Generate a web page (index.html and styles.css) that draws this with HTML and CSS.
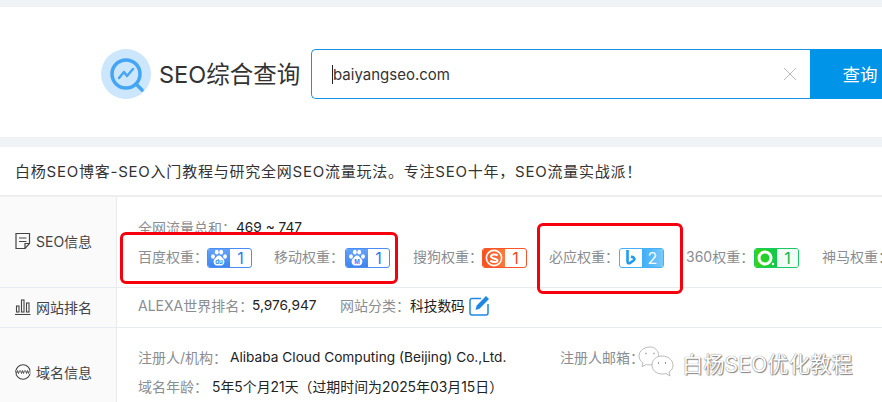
FILE: index.html
```html
<!DOCTYPE html>
<html lang="zh-CN">
<head>
  <meta charset="UTF-8">
  <title>SEO综合查询</title>
  <link rel="stylesheet" href="styles.css">
</head>
<body>
  <header class="search-band">
    <div class="logo">
      <svg width="50" height="50" viewBox="0 0 50 50">
        <circle cx="25" cy="25" r="25" fill="#cbe6fd"/>
        <circle cx="25" cy="25" r="14" fill="none" stroke="#45a5f5" stroke-width="3.5"/>
        <path d="M35 35l6 6" stroke="#45a5f5" stroke-width="3.6" stroke-linecap="round"/>
        <path d="M18 29l5-6 3 4 6-7" fill="none" stroke="#45a5f5" stroke-width="2.4" stroke-linecap="round" stroke-linejoin="round"/>
      </svg>
      <span class="logo-title">SEO综合查询</span>
    </div>
    <div class="search-box">
      <div class="search-input">
        <span class="search-value">baiyangseo.com</span>
        <svg class="search-clear" width="14" height="14" viewBox="0 0 14 14">
          <path d="M1 1l12 12M13 1L1 13" stroke="#bbb" stroke-width="1"/>
        </svg>
      </div>
      <button class="search-btn">查询</button>
    </div>
  </header>

  <main class="result">
    <p class="slogan">白杨SEO博客-SEO入门教程与研究全网SEO流量玩法。专注SEO十年&#xFF0C;SEO流量实战派&#xFF01;</p>

    <section class="row row-seo">
      <div class="row-head">
        <svg width="16" height="18" viewBox="0 0 16 18" fill="none" stroke="#444" stroke-width="1.2">
          <path d="M1 1.5h13.5v10L10 16.5H1z"/>
          <path d="M4 6h7.5M4 9.5h7.5M10 16.5v-5h4.5"/>
        </svg>
        <span>SEO信息</span>
      </div>
      <div class="row-body">
        <div class="line">
          <span class="key total-key">全网流量总和&#xFF1A;</span><span class="val">469 ~ 747</span>
        </div>
        <div class="line weights">
          <div class="weight">
            <span class="key">百度权重&#xFF1A;</span>
            <span class="badge badge-baidu">
              <span class="badge-icon">
                <svg width="18" height="18" viewBox="0 0 18 18">
                  <g fill="#fff">
                    <ellipse cx="3" cy="7.5" rx="1.9" ry="2.3"/><ellipse cx="6.8" cy="3.2" rx="1.9" ry="2.4"/>
                    <ellipse cx="11.2" cy="3.2" rx="1.9" ry="2.4"/><ellipse cx="15" cy="7.5" rx="1.9" ry="2.3"/>
                    <path d="M9 6.5c-2.2 0-2.8 2.2-4.5 3.6-1.7 1.5-.9 6.4 2 6.4h5c2.9 0 3.7-4.9 2-6.4C11.8 8.7 11.2 6.5 9 6.5z"/>
                  </g>
                  <text class="paw-text" x="9" y="15.2">du</text>
                </svg>
              </span>
              <span class="badge-num">1</span>
            </span>
          </div>
          <div class="weight">
            <span class="key">移动权重&#xFF1A;</span>
            <span class="badge badge-baidu">
              <span class="badge-icon">
                <svg width="18" height="18" viewBox="0 0 18 18">
                  <g fill="#fff">
                    <ellipse cx="3" cy="7.5" rx="1.9" ry="2.3"/><ellipse cx="6.8" cy="3.2" rx="1.9" ry="2.4"/>
                    <ellipse cx="11.2" cy="3.2" rx="1.9" ry="2.4"/><ellipse cx="15" cy="7.5" rx="1.9" ry="2.3"/>
                    <path d="M9 6.5c-2.2 0-2.8 2.2-4.5 3.6-1.7 1.5-.9 6.4 2 6.4h5c2.9 0 3.7-4.9 2-6.4C11.8 8.7 11.2 6.5 9 6.5z"/>
                  </g>
                  <text class="paw-text" x="9" y="15.2">M</text>
                </svg>
              </span>
              <span class="badge-num">1</span>
            </span>
          </div>
          <div class="weight">
            <span class="key">搜狗权重&#xFF1A;</span>
            <span class="badge badge-sogou">
              <span class="badge-icon">
                <svg width="18" height="18" viewBox="0 0 18 18" fill="none" stroke="#fff">
                  <circle cx="9" cy="9" r="7.6" stroke-width="1.6"/>
                  <path d="M12.6 6.5C11 5 6 5 6 7.5S12.5 9.5 12.5 11.5 7 13.5 5.3 11.5" stroke-width="2"/>
                </svg>
              </span>
              <span class="badge-num">1</span>
            </span>
          </div>
          <div class="weight">
            <span class="key">必应权重&#xFF1A;</span>
            <span class="badge badge-bing">
              <span class="badge-icon">
                <svg width="12" height="16" viewBox="0 0 12 16" fill="none" stroke="#1f9bf0" stroke-width="2.6">
                  <path d="M2.5 0v11.5q0 2.5 2.5 1.5l3.5-2.5q2-1.5 0-3L6 6.5"/>
                </svg>
              </span>
              <span class="badge-num">2</span>
            </span>
          </div>
          <div class="weight">
            <span class="key">360权重&#xFF1A;</span>
            <span class="badge badge-360">
              <span class="badge-icon">
                <svg width="20" height="18" viewBox="0 0 20 18" fill="none">
                  <circle cx="9" cy="9" r="6" stroke="#fff" stroke-width="3"/>
                  <circle cx="17" cy="15" r="1.2" fill="#fff"/>
                </svg>
              </span>
              <span class="badge-num">1</span>
            </span>
          </div>
          <div class="weight">
            <span class="key">神马权重&#xFF1A;</span>
          </div>
        </div>
      </div>
    </section>

    <section class="row row-rank">
      <div class="row-head">
        <svg width="16" height="16" viewBox="0 0 16 16" fill="none" stroke="#444" stroke-width="1.1">
          <path d="M0 15.5h15.5"/>
          <rect x="1.5" y="7" width="2.5" height="6"/>
          <rect x="6.5" y="1" width="2.5" height="12"/>
          <rect x="11.5" y="4" width="2.5" height="9"/>
        </svg>
        <span>网站排名</span>
      </div>
      <div class="row-body">
        <div class="line">
          <span class="key alexa-key">ALEXA世界排名&#xFF1A;</span><span class="val val-alexa">5,976,947</span>
          <span class="key cat-key">网站分类&#xFF1A;</span><span class="val">科技数码</span>
          <svg class="edit-icon" width="21" height="21" viewBox="0 0 21 21" fill="none">
            <path d="M12 3.5H3a2 2 0 0 0-2 2V18a2 2 0 0 0 2 2h14a2 2 0 0 0 2-2V9" stroke="#1e88e5" stroke-width="1.5"/>
            <path d="M6.5 15l1.2-4.5L17 1l3 3-9.500 9.700z" fill="#1e88e5"/>
          </svg>
        </div>
      </div>
    </section>

    <section class="row row-domain">
      <div class="row-head">
        <svg width="16" height="16" viewBox="0 0 16 16" fill="none" stroke="#444" stroke-width="1.1">
          <circle cx="8" cy="8" r="7.2"/>
          <path d="M.5 8h15" stroke-width="3.5" stroke="#fafafa"/>
          <path d="M.5 6.5l1 3 1-3 1 3 1-3M5.5 6.5l1 3 1-3 1 3 1-3M10.5 6.5l1 3 1-3 1 3 1-3" stroke-width=".9"/>
        </svg>
        <span>域名信息</span>
      </div>
      <div class="row-body">
        <div class="line">
          <span class="key owner-key">注册人/机构&#xFF1A;</span><span class="val owner-val">Alibaba Cloud Computing (Beijing) Co.,Ltd.</span>
          <span class="key">注册人邮箱&#xFF1A;</span>
        </div>
        <div class="line line-age">
          <span class="key age-key">域名年龄&#xFF1A;</span><span class="val val-age">5年5个月21天&#xFF08;过期时间为2025年03月15日&#xFF09;</span>
        </div>
      </div>
    </section>
  </main>

  <div class="mark mark-left"></div>
  <div class="mark mark-right"></div>

  <div class="watermark">
    <svg width="36" height="32" viewBox="0 0 36 32" fill="#fff" stroke="#aaa" stroke-width=".8">
      <path d="M12 1C6 1 1 5 1 10c0 3 2 5.5 4 7l-1 3.5 4.5-2c1.5.5 4 .5 6 0C24 15 22 1 12 1z"/>
      <path d="M24 10c-6 0-10 4-10 9s4 9 10 9c1.5 0 3 0 4-.5l4 2.500-1-4c3-2 4-4 4-7 0-5-5-9-11-9z"/>
      <path d="M7.5 7.5h1M15.5 7.5h1M20 17h1M27 17h1" stroke="#777" stroke-width="1.4"/>
    </svg>
    <span>白杨SEO优化教程</span>
  </div>
</body>
</html>
```

FILE: styles.css
```css
* {
  box-sizing: border-box;
}

html,
body {
  height: 402px;
  overflow: hidden;
}

body {
  margin: 0;
  padding-top: 7px;
  position: relative;
  background-color: #eff3f5;
  color: #333;
  font-family: Inter, "Noto Sans CJK SC", sans-serif;
  font-size: 14px;
}

svg {
  display: block;
  flex-shrink: 0;
}

.search-band {
  display: flex;
  align-items: center;
  height: 130px;
  padding: 4px 0 0 101px;
  background-color: white;
}

.logo {
  display: flex;
  align-items: center;
  gap: 8px;
  width: 210px;
  flex-shrink: 0;
}

.logo-title {
  padding-bottom: 2px;
  font-size: 23.5px;
  white-space: nowrap;
}

.search-box {
  display: flex;
  height: 50px;
  flex-shrink: 0;
}

.search-input {
  display: flex;
  align-items: center;
  justify-content: space-between;
  width: 499px;
  padding: 0 13px 0 20px;
  border: 1px solid #1a92e0;
  border-right: none;
  border-radius: 5px 0 0 5px;
}

.search-value {
  border-left: 1px solid #222;
  font-size: 15px;
  line-height: 19px;
}

.search-btn {
  width: 100px;
  padding: 0 0 2px;
  border: none;
  background-color: #0094e8;
  color: white;
  font-family: inherit;
  font-size: 17.5px;
}

.result {
  margin-top: 10px;
  background-color: white;
}

.slogan {
  height: 50px;
  margin: 0;
  padding-left: 15px;
  border-bottom: 2px solid #eceef0;
  font-size: 15px;
  letter-spacing: .77px;
  line-height: 49px;
  color: #333;
  white-space: nowrap;
}

.row {
  display: flex;
  border-bottom: 1px solid #e9ecef;
}

.row-seo {
  height: 91px;
}

.row-rank {
  height: 40px;
}

.row-domain {
  height: 90px;
}

.row-head {
  display: flex;
  align-items: center;
  gap: 5px;
  width: 117px;
  flex-shrink: 0;
  padding: 0 0 2px 15px;
  background-color: #fafafa;
  border-right: 1px solid #e9ecef;
  color: #444;
}

.row-body {
  padding-left: 21px;
  white-space: nowrap;
}

.row-seo .row-body {
  padding-top: 15px;
}

.row-rank .row-body {
  padding-top: 2px;
}

.row-domain .row-body {
  padding-top: 14px;
}

.line {
  display: flex;
  align-items: center;
  height: 30px;
}

.line-age {
  margin-top: -1px;
}

.key {
  color: #8a8d91;
}

.val {
  color: #222;
  font-size: 13.7px;
}

.val-age {
  font-size: 13.9px;
}

.total-key {
  width: 98px;
}

.alexa-key {
  width: 114px;
}

.val-alexa {
  width: 88px;
}

.cat-key {
  width: 70px;
}

.edit-icon {
  margin-left: 4px;
}

.owner-key {
  width: 92px;
}

.owner-val {
  width: 330px;
}

.age-key {
  width: 74px;
}

.weights {
  display: grid;
  grid-template-columns: 136px 139px 136px 137px 136px auto;
  margin-top: 1px;
}

.weight {
  display: flex;
  align-items: center;
}

.weight .key {
  width: 69px;
  padding-bottom: 4px;
  white-space: nowrap;
}

.weight:nth-child(2) .key {
  width: 71px;
}

.weight:nth-child(4) .key {
  width: 70px;
}

.weight:nth-child(5) .key {
  width: 68px;
}

.badge {
  display: flex;
  width: 45px;
  height: 20px;
  border: 1px solid;
  border-radius: 3px;
  overflow: hidden;
}

.badge-icon {
  display: flex;
  align-items: center;
  justify-content: center;
  width: 22px;
}

.badge-num {
  flex: 1;
  text-align: center;
  font-size: 16px;
  line-height: 19px;
}

.paw-text {
  fill: #3d85f0;
  font-size: 6px;
  font-weight: bold;
  text-anchor: middle;
}

.badge-baidu {
  border-color: #4a8ef5;
  color: #2f7bec;
}

.badge-baidu .badge-icon {
  background: linear-gradient(#64a2fa, #3d85f0);
}

.badge-sogou {
  border-color: #f8562a;
  color: #f8461a;
}

.badge-sogou .badge-icon {
  background: linear-gradient(90deg, #f8501f, #fb7a3c);
}

.badge-bing {
  border-color: #45b0f7;
}

.badge-bing .badge-num {
  background: linear-gradient(90deg, #3fadf6, #78caf9);
  color: white;
}

.badge-360 {
  border-color: #18c964;
  color: #10b850;
}

.badge-360 .badge-icon {
  background: linear-gradient(90deg, #35d60c, #0fc94a);
}

.badge-360 .badge-num {
  background-color: #f2fcf6;
}

/* red marks drawn over the screenshot */
.mark {
  position: absolute;
  border: 3px solid #f5000c;
  border-radius: 6px;
}

.mark-left {
  left: 120px;
  top: 232px;
  width: 278px;
  height: 52px;
}

.mark-right {
  left: 537px;
  top: 223px;
  width: 146px;
  height: 71px;
}

.watermark {
  position: absolute;
  left: 638px;
  top: 346px;
  display: flex;
  align-items: center;
  gap: 8px;
  font-size: 21.3px;
  color: white;
  text-shadow: 0 0 1px #555, 1px 1px 1px #888;
}
```
